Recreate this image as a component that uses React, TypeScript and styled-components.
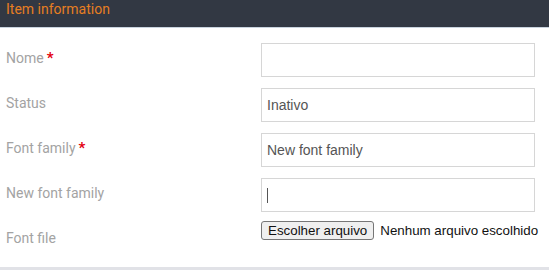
import styled, { createGlobalStyle } from "styled-components";

const GlobalStyle = createGlobalStyle`
  html, body {
    margin: 0;
    padding: 0;
    background: #e1e2e7;
  }
  * {
    box-sizing: border-box;
  }
`;

const fields = [
  { label: "Nome", required: true, value: "" },
  { label: "Status", required: false, value: "Inativo" },
  { label: "Font family", required: true, value: "New font family" },
  { label: "New font family", required: false, value: "", caret: true },
];

export default function App() {
  return (
    <>
      <GlobalStyle />
      <Panel>
        <PanelHeader>Item information</PanelHeader>
        <PanelBody>
          {fields.map((field) => (
            <Row key={field.label}>
              <Label>
                {field.label}
                {field.required && <Required>*</Required>}
              </Label>
              <TextBox>
                {field.value}
                {field.caret && <Caret />}
              </TextBox>
            </Row>
          ))}
          <Row>
            <Label>Font file</Label>
            <FilePicker>
              <FileButton type="button">Escolher arquivo</FileButton>
              <FileName>Nenhum arquivo escolhido</FileName>
            </FilePicker>
          </Row>
        </PanelBody>
      </Panel>
    </>
  );
}

const Panel = styled.div`
  width: 549px;
  height: 267px;
  background: #ffffff;
`;

const PanelHeader = styled.div`
  height: 28px;
  background: #323843;
  border-bottom: 1px solid #c9d3de;
  padding: 1px 6px 0;
  color: #e67e22;
  font-family: Roboto, "Liberation Sans", sans-serif;
  font-size: 14px;
  line-height: 17px;
`;

const PanelBody = styled.div`
  padding-top: 15px;
  display: flex;
  flex-direction: column;
  gap: 11px;
`;

const Row = styled.div`
  display: grid;
  grid-template-columns: 261px 274px;
  align-items: start;
`;

const Label = styled.div`
  padding: 7px 0 0 6px;
  color: #a3a3a3;
  font-family: Roboto, "Liberation Sans", sans-serif;
  font-size: 14px;
  line-height: 17px;
`;

const Required = styled.span`
  color: #e3000f;
  font-weight: 700;
  margin-left: 3px;
  font-size: 15px;
`;

const TextBox = styled.div`
  height: 34px;
  border: 1px solid #d6d6d6;
  padding: 0 5px;
  display: flex;
  align-items: center;
  color: #555555;
  font-family: "Liberation Sans", Arial, sans-serif;
  font-size: 14px;
`;

const Caret = styled.span`
  width: 1px;
  height: 15px;
  background: #555555;
`;

const FilePicker = styled.div`
  display: flex;
  align-items: center;
  height: 19px;
  margin-top: -2px;
  font-family: "Liberation Sans", Arial, sans-serif;
  font-size: 13.33px;
  white-space: nowrap;
`;

const FileButton = styled.button`
  height: 19px;
  padding: 0 6px;
  margin: 0 6px 0 0;
  background: #efefef;
  border: 1px solid #767676;
  border-radius: 3px;
  color: #111111;
  font-family: inherit;
  font-size: 13.33px;
  line-height: 16px;
`;

const FileName = styled.span`
  color: #111111;
`;
